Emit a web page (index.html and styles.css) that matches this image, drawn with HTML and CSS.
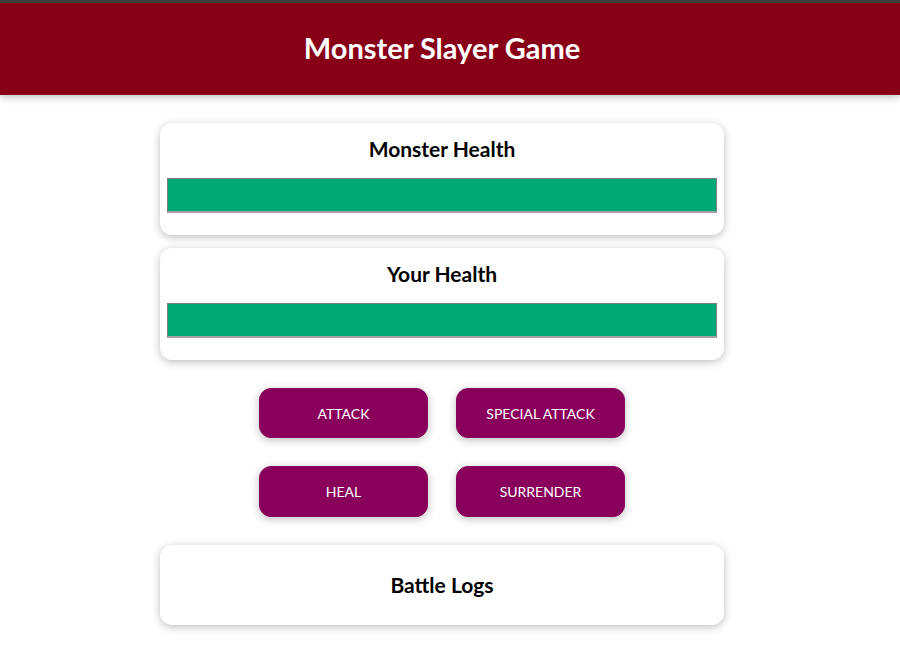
FILE: index.html
```html
<!DOCTYPE html>
<html lang="en">
<head>
<meta charset="utf-8">
<title>Monster Slayer Game</title>
<link rel="stylesheet" href="styles.css">
</head>
<body>
  <header class="app-header">
    <h1 class="app-title">Monster Slayer Game</h1>
  </header>
  <main class="game">
    <section class="card">
      <h2 class="card-title">Monster Health</h2>
      <div class="healthbar"><div class="healthbar-value" style="width: 100%"></div></div>
    </section>
    <section class="card">
      <h2 class="card-title">Your Health</h2>
      <div class="healthbar"><div class="healthbar-value" style="width: 100%"></div></div>
    </section>
    <section class="controls">
      <button class="btn">ATTACK</button>
      <button class="btn">SPECIAL ATTACK</button>
      <button class="btn">HEAL</button>
      <button class="btn">SURRENDER</button>
    </section>
    <section class="card card-logs">
      <h2 class="card-title">Battle Logs</h2>
    </section>
  </main>
</body>
</html>
```
FILE: styles.css
```css
* { box-sizing: border-box; }
html, body {
  margin: 0;
  padding: 0;
  background: #ffffff;
  font-family: "Lato", "Open Sans", sans-serif;
}
body { border-top: 3px solid #3d3d3d; }
.app-header {
  background: #880017;
  height: 92px;
  display: flex;
  align-items: center;
  justify-content: center;
  padding-right: 16px;
  padding-bottom: 4px;
  box-shadow: 0 2px 8px rgba(0, 0, 0, 0.26);
}
.app-title {
  margin: 0;
  color: #ffffff;
  font-size: 29px;
  font-weight: 700;
  line-height: 1;
}
.game {
  width: 884px;
  display: flex;
  flex-direction: column;
  align-items: center;
  padding-top: 28px;
}
.card {
  width: 564px;
  background: #fff;
  border-radius: 12px;
  box-shadow: 0 2px 8px rgba(0, 0, 0, 0.26);
  padding: 11px 7px 22px;
  margin-bottom: 13px;
  text-align: center;
}
.card-title {
  margin: 0;
  font-size: 21px;
  font-weight: 700;
  line-height: 30px;
  color: #000;
}
.healthbar {
  margin-top: 14px;
  height: 35px;
  border: 1px solid #7d7d7d;
  border-bottom: 2px solid #a8a0a4;
  background: #fde5e5;
}
.healthbar-value {
  height: 100%;
  background: #00a876;
}
.controls {
  margin-top: 15px;
  display: grid;
  grid-template-columns: 169px 169px;
  grid-template-rows: 50px 51px;
  column-gap: 28px;
  row-gap: 28px;
  margin-bottom: 28px;
}
.btn {
  height: 100%;
  border: 1px solid #88005b;
  background: #88005b;
  color: #fff;
  border-radius: 12px;
  font-family: inherit;
  font-size: 14px;
  box-shadow: 0 2px 8px rgba(0, 0, 0, 0.26);
  cursor: pointer;
}
.card-logs {
  height: 80px;
  padding: 25px 7px;
}
```
